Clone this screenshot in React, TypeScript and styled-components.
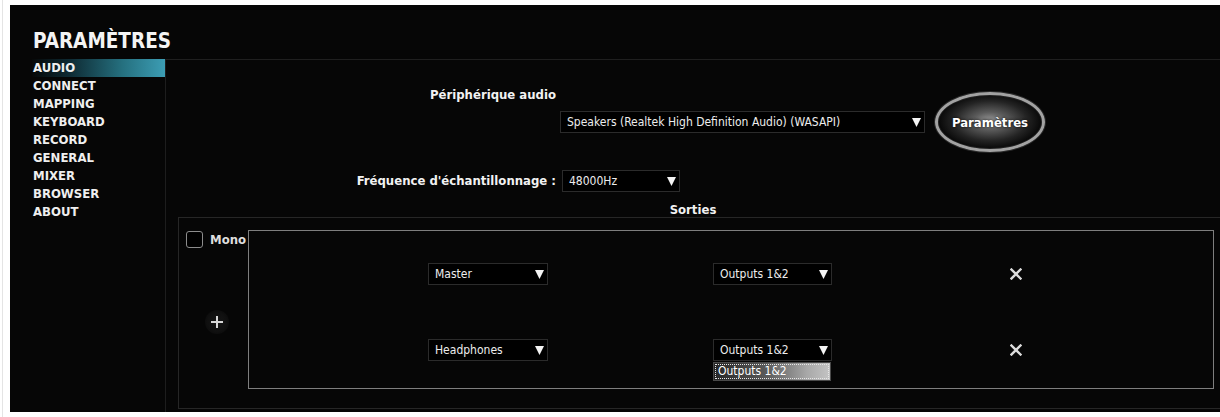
import styled, { createGlobalStyle } from "styled-components";

const FONT = `"DejaVu Sans Condensed", "DejaVu Sans", Verdana, sans-serif`;

const GlobalStyle = createGlobalStyle`
    html, body {
        margin: 0;
        padding: 0;
        background: #ffffff;
    }
    * {
        box-sizing: border-box;
    }
`;

const Page = styled.div`
    width: 1220px;
    height: 417px;
    padding: 5px 0 0 10px;
    background: #ffffff;
    box-shadow: inset 2px 0 0 #ffffff, inset 3px 0 0 #e4e4e4;
    font-family: ${FONT};
`;

const Panel = styled.div`
    width: 1210px;
    height: 407px;
    display: flex;
    flex-direction: column;
    overflow: hidden;
    background-color: #060606;
    color: #f2f2f2;
`;

const Header = styled.div`
    height: 54px;
    padding: 24px 0 0 23px;
    flex-shrink: 0;
`;

const Title = styled.h1`
    margin: 0;
    font-size: 20.5px;
    line-height: 24px;
    font-weight: bold;
    color: #f4f4f4;
`;

const Body = styled.div`
    flex: 1;
    display: flex;
    min-height: 0;
`;

const Sidebar = styled.nav`
    width: 156px;
    flex-shrink: 0;
    padding-left: 22px;
    border-right: 1px solid #1d1d1d;
    display: flex;
    flex-direction: column;
`;

const NavItem = styled.div<{ $active?: boolean }>`
    height: 18px;
    line-height: 18px;
    padding-left: 1px;
    font-size: 13px;
    font-weight: bold;
    color: #efefef;
    background: ${p => p.$active
        ? "linear-gradient(90deg, #060808 0%, #0e2a33 28%, #25707f 68%, #3c9db4 100%)"
        : "transparent"};
`;

const Content = styled.main`
    flex: 1;
    border-top: 1px solid #1f1f1f;
    display: flex;
    flex-direction: column;
`;

const FormRow = styled.div<{ $top: number }>`
    display: grid;
    grid-template-columns: 390px 1fr;
    column-gap: 4px;
    align-items: center;
    margin-top: ${p => p.$top}px;
`;

const FieldLabel = styled.label`
    justify-self: end;
    font-size: 13px;
    line-height: 14px;
    font-weight: bold;
    color: #f2f2f2;
`;

const DeviceLine = styled.div`
    height: 22px;
    display: flex;
    align-items: center;
    gap: 10px;
`;

const SelectBox = styled.div<{ $width: number; $shift?: number }>`
    position: relative;
    width: ${p => p.$width}px;
    height: 22px;
    margin-left: ${p => p.$shift ?? 0}px;
    padding: 0 3px 0 6px;
    display: flex;
    align-items: center;
    justify-content: space-between;
    border: 1px solid #2b2b2b;
    background: #000000;
    font-size: 12px;
    color: #ededed;
    white-space: nowrap;
`;

const OrbButton = styled.button`
    width: 110px;
    height: 60px;
    margin: -19px 0;
    border-radius: 50%;
    border: 3px solid #a2a2a2;
    box-shadow: 0 0 0 1px #2a2a2a, inset 0 0 0 1px #222;
    background: radial-gradient(ellipse at 50% 48%, #9a9a9a 0%, #5c5c5c 22%, #242424 50%, #050505 72%);
    font-family: ${FONT};
    font-size: 13px;
    font-weight: bold;
    color: #ffffff;
    text-shadow: 0 0 3px #000;
    padding: 0;
`;

const Group = styled.section`
    margin: 11px 0 0 12px;
    display: flex;
    flex-direction: column;
`;

const Legend = styled.div`
    width: 1030px;
    text-align: center;
    font-size: 13px;
    line-height: 14px;
    font-weight: bold;
    color: #f2f2f2;
`;

const GroupBox = styled.div`
    width: 1048px;
    display: flex;
    padding: 12px 0 19px 0;
    border: 1px solid #262626;
    border-right: none;
`;

const SideColumn = styled.div`
    width: 69px;
    flex-shrink: 0;
    padding-left: 7px;
    display: flex;
    flex-direction: column;
`;

const CheckRow = styled.div`
    margin-top: 1px;
    height: 17px;
    display: flex;
    align-items: center;
    gap: 7px;
`;

const Checkbox = styled.span`
    width: 17px;
    height: 17px;
    flex-shrink: 0;
    border: 1px solid #8c8c8c;
    border-radius: 3px;
    background: #000;
`;

const CheckLabel = styled.span`
    font-size: 13px;
    font-weight: bold;
    color: #dedede;
`;

const AddButton = styled.div`
    width: 24px;
    height: 24px;
    margin: 62px 0 0 19px;
    border-radius: 50%;
    display: flex;
    align-items: center;
    justify-content: center;
    background: radial-gradient(circle, #161616 0%, #101010 55%, rgba(6, 6, 6, 0) 100%);
`;

const Routes = styled.div`
    width: 966px;
    height: 159px;
    padding: 32px 0 0 179px;
    border: 1px solid #7e7e7e;
    display: flex;
    flex-direction: column;
`;

const RouteRow = styled.div<{ $top: number }>`
    display: grid;
    grid-template-columns: 285px 297px 12px;
    align-items: center;
    height: 22px;
    margin-top: ${p => p.$top}px;
`;

const RemoveButton = styled.div`
    width: 12px;
    height: 12px;
    display: flex;
`;

const DropList = styled.div`
    position: absolute;
    top: 22px;
    left: -1px;
    width: 118px;
    height: 19px;
    border: 1px solid #4a4a4a;
    background: linear-gradient(90deg, #262626 0%, #5a5a5a 45%, #a8a8a8 80%, #c4c4c4 100%);
    padding: 1px;
`;

const DropItem = styled.div`
    height: 100%;
    padding-left: 2px;
    border: 1px dotted #e6e6e6;
    font-size: 12px;
    line-height: 13px;
    color: #ffffff;
`;

const Arrow = () => (
    <svg width="9" height="10" viewBox="0 0 9 10">
        <polygon points="0,1 9,1 4.5,10" fill="#f4f4f4" />
    </svg>
);

const Cross = () => (
    <svg width="12" height="12" viewBox="0 0 12 12">
        <path d="M1.5 1.5 L10.5 10.5 M10.5 1.5 L1.5 10.5" stroke="#dcdcdc" strokeWidth="2.4" strokeLinecap="square" />
    </svg>
);

const Plus = () => (
    <svg width="14" height="14" viewBox="0 0 14 14">
        <path d="M7 1 V13 M1 7 H13" stroke="#d8d8d8" strokeWidth="2" />
    </svg>
);

const Select = ({ value, width, shift, children }: { value: string; width: number; shift?: number; children?: React.ReactNode }) => (
    <SelectBox $width={width} $shift={shift}>
        <span>{value}</span>
        <Arrow />
        {children}
    </SelectBox>
);

const menu = ["AUDIO", "CONNECT", "MAPPING", "KEYBOARD", "RECORD", "GENERAL", "MIXER", "BROWSER", "ABOUT"];

const routes = [
    { source: "Master", output: "Outputs 1&2", open: false },
    { source: "Headphones", output: "Outputs 1&2", open: true },
];

const App = () => {
    return (
        <>
            <GlobalStyle />
            <Page>
                <Panel>
                    <Header>
                        <Title>PARAMÈTRES</Title>
                    </Header>
                    <Body>
                        <Sidebar>
                            {menu.map(item => (
                                <NavItem key={item} $active={item === "AUDIO"}>{item}</NavItem>
                            ))}
                        </Sidebar>
                        <Content>
                            <FormRow $top={28}>
                                <FieldLabel>Périphérique audio</FieldLabel>
                                <span />
                            </FormRow>
                            <FormRow $top={9}>
                                <span />
                                <DeviceLine>
                                    <Select value="Speakers (Realtek High Definition Audio) (WASAPI)" width={365} />
                                    <OrbButton>Paramètres</OrbButton>
                                </DeviceLine>
                            </FormRow>
                            <FormRow $top={37}>
                                <FieldLabel>Fréquence d'échantillonnage :</FieldLabel>
                                <Select value="48000Hz" width={118} shift={2} />
                            </FormRow>
                            <Group>
                                <Legend>Sorties</Legend>
                                <GroupBox>
                                    <SideColumn>
                                        <CheckRow>
                                            <Checkbox />
                                            <CheckLabel>Mono</CheckLabel>
                                        </CheckRow>
                                        <AddButton><Plus /></AddButton>
                                    </SideColumn>
                                    <Routes>
                                        {routes.map((r, i) => (
                                            <RouteRow key={r.source} $top={i === 0 ? 0 : 54}>
                                                <Select value={r.source} width={120} />
                                                <Select value={r.output} width={119}>
                                                    {r.open && (
                                                        <DropList>
                                                            <DropItem>{r.output}</DropItem>
                                                        </DropList>
                                                    )}
                                                </Select>
                                                <RemoveButton><Cross /></RemoveButton>
                                            </RouteRow>
                                        ))}
                                    </Routes>
                                </GroupBox>
                            </Group>
                        </Content>
                    </Body>
                </Panel>
            </Page>
        </>
    );
};

export default App;
